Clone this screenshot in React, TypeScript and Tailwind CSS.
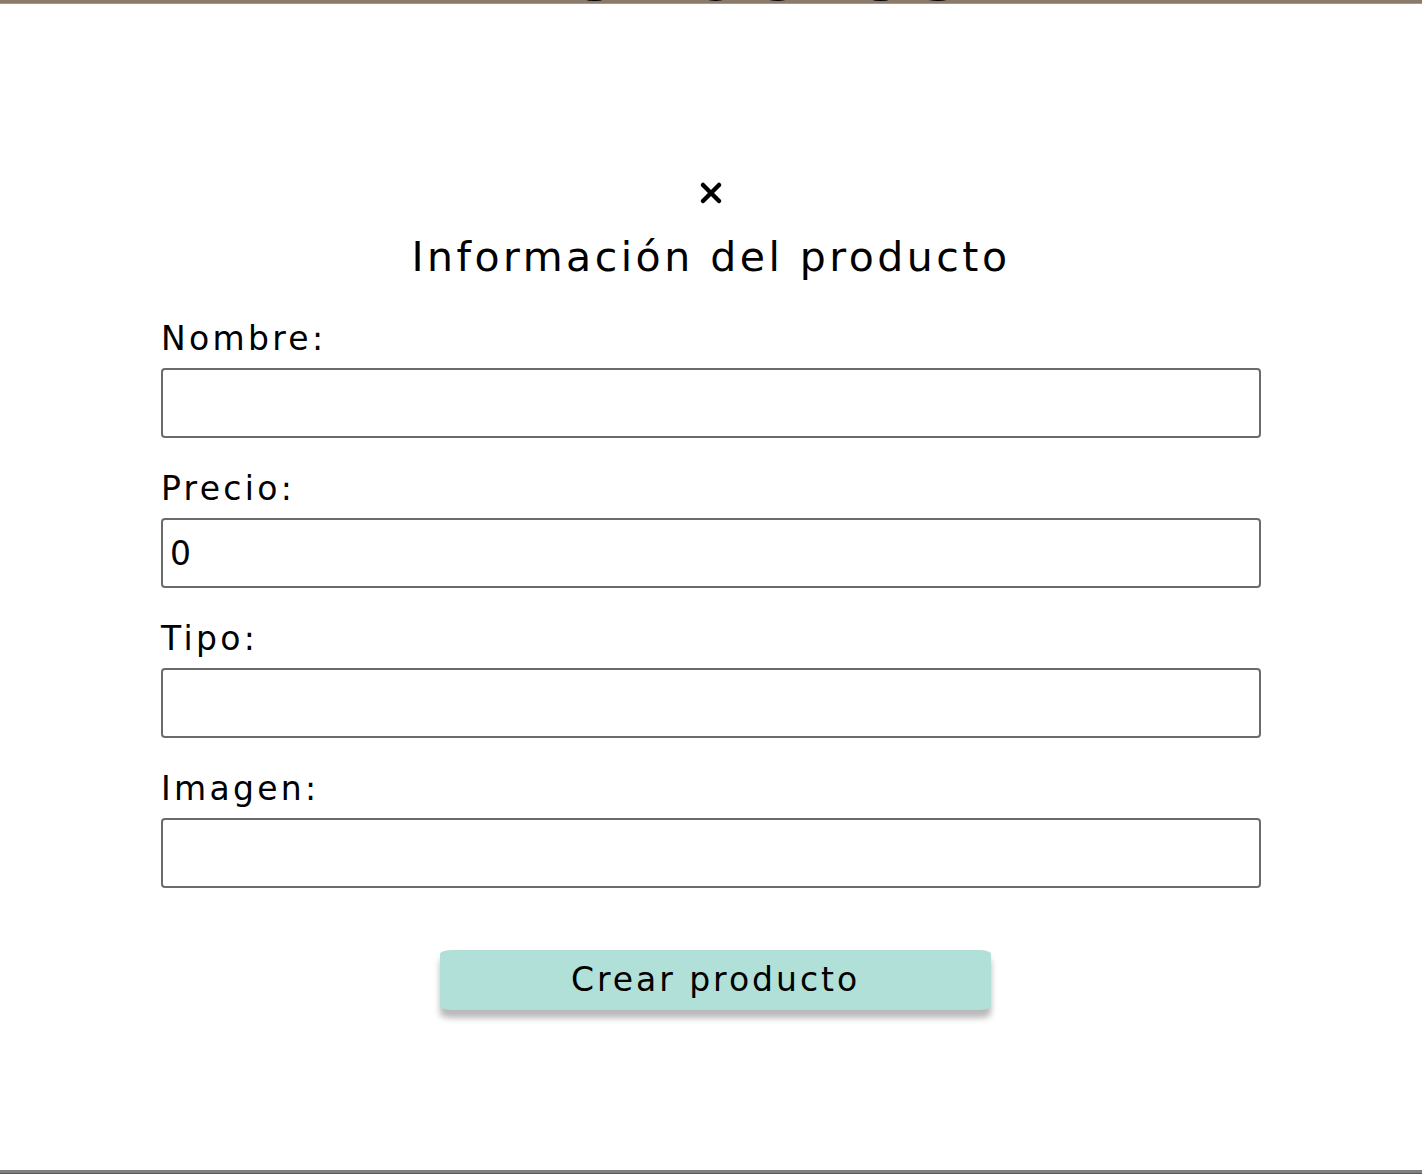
import React from 'react';

const fields = [
  { label: 'Nombre:', value: '' },
  { label: 'Precio:', value: '0' },
  { label: 'Tipo:', value: '' },
  { label: 'Imagen:', value: '' },
];

const App: React.FC = () => {
  return (
    <div className="min-h-[1174px] flex flex-col bg-white text-black font-['DejaVu_Sans',sans-serif]">
      <header className="h-[4px] overflow-hidden bg-[#8b7a69] border-b border-[#9a9a9a] flex justify-center">
        <h1 className="-mt-[58px] text-[68px] leading-[70px] tracking-[0.06em] font-bold">PRODUCTOS</h1>
      </header>

      <main className="flex-1 flex flex-col items-center">
        <button className="mt-[173px] w-[32px] h-[32px] flex items-center justify-center">
          <svg width="24" height="24" viewBox="0 0 24 24" fill="none" stroke="black" strokeWidth="4.5" strokeLinecap="round">
            <line x1="4" y1="4" x2="20" y2="20" />
            <line x1="20" y1="4" x2="4" y2="20" />
          </svg>
        </button>

        <h2 className="mt-[22px] text-[41px] leading-[52px] tracking-[0.085em] font-normal">Información del producto</h2>

        <form className="mt-[35px] w-[1100px] flex flex-col gap-[30px]">
          {fields.map((f) => (
            <div key={f.label} className="flex flex-col gap-[8px]">
              <label className="text-[33px] leading-[42px] tracking-[0.1em]">{f.label}</label>
              <input
                defaultValue={f.value}
                className="h-[70px] w-full border-2 border-[#6b6b6b] rounded-[4px] px-[7px] text-[33px] outline-none"
              />
            </div>
          ))}
        </form>

        <button className="mt-[62px] ml-[9px] w-[551px] h-[60px] bg-[#b0e0d7] rounded-[12px/4px] shadow-[0_8px_6px_rgba(0,0,0,0.28)] text-[33px] leading-[40px] tracking-[0.09em]">
          Crear producto
        </button>
      </main>

      <footer className="h-[4px] border-t-[3px] border-[#7f7f7f] bg-[#8b4a23]" />
    </div>
  );
};

export default App;
